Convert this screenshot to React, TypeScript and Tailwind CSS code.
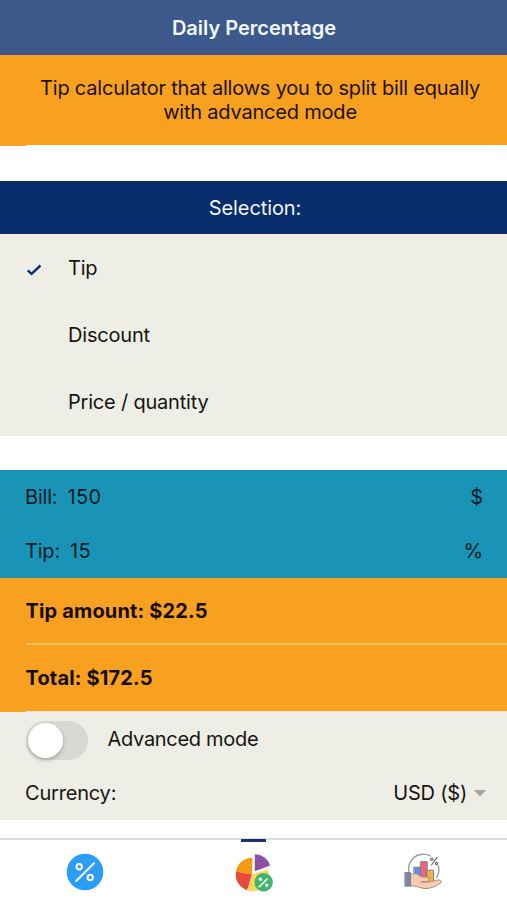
import { useState } from 'react';
import clsx from 'clsx';

const modes = ['Tip', 'Discount', 'Price / quantity'];

const inputs = [
  { label: 'Bill:', value: '150', unit: '$' },
  { label: 'Tip:', value: '15', unit: '%' },
];

function PercentIcon() {
  return (
    <svg className="size-[38px]" viewBox="0 0 38 38" fill="none">
      <circle cx="19" cy="19" r="18.3" fill="#2a9df4" />
      <g stroke="#fff" strokeWidth="2" strokeLinecap="round">
        <path d="M10.2 28 28 10.2" />
        <circle cx="13.2" cy="13.7" r="2.7" />
        <circle cx="24.2" cy="24.5" r="2.7" />
      </g>
    </svg>
  );
}

function PieIcon() {
  return (
    <svg className="size-[38px]" viewBox="0 0 38 38" fill="none">
      <path d="M17 20.5 1 17.5A16.3 16.3 0 0 1 17.5 3.7Z" fill="#f39c12" />
      <path d="M17 20.5 12.2 36.2A16.3 16.3 0 0 1 1 17.5Z" fill="#e8493a" />
      <path d="M17 20.5 32.8 15.5A16.3 16.3 0 0 1 12.2 36.2Z" fill="#fdd45c" />
      <path d="M19.8 17.2V.2A16.3 16.3 0 0 1 35.2 11.4Z" fill="#8a4fa8" />
      <circle cx="28.6" cy="28.3" r="9.2" fill="#3cb668" />
      <g fill="#fff">
        <path d="m32 24.2.9.8-8.4 8.6-.9-.8Z" stroke="#fff" strokeWidth=".5" />
        <circle cx="25.4" cy="25.3" r="1.7" />
        <circle cx="31.7" cy="31.3" r="1.7" />
      </g>
    </svg>
  );
}

function HandChartIcon() {
  return (
    <svg className="size-[40px]" viewBox="0 0 40 40" fill="none" strokeLinecap="round" strokeLinejoin="round">
      <path
        d="M5.2 20.8A14.9 14.9 0 0 1 26.5 3M34.3 12.8A14.9 14.9 0 0 1 32.6 24.5"
        stroke="#98a0a4"
        strokeWidth="1.4"
      />
      <g stroke="#7d8087" strokeWidth="1">
        <path d="M10.2 14.2h6.5v10.3h-6.5Z" fill="#5991f0" />
        <path d="M16.7 8.7h6.5v17h-6.5Z" fill="#f0627a" />
        <path d="M23.2 17.2h6.4v13.3h-6.4Z" fill="#f0b23e" />
      </g>
      <path
        d="M6.4 21.4c4.4-1.6 7.8-.4 10.8 2.6h4.8c3.8 0 3.8 4.7.3 4.9h-5.4 6.6c4 .1 7-1.4 10.4-1.9 3.6-.4 4.5 2.3 2 3.6-4.8 3-9.7 5.2-15 4.9-4.8-.3-9.5-3.2-14.5-2.8Z"
        fill="#fbcbb0"
        stroke="#a28e87"
        strokeWidth="1"
      />
      <path d="M1.2 19.5h5.4v13.7H1.2Z" fill="#7a86a3" stroke="#747986" strokeWidth=".8" />
      <g stroke="#666d73" strokeWidth="1.2">
        <path d="m27.5 12 5.4-7.4" />
        <circle cx="27.8" cy="6.2" r="1.2" />
        <circle cx="32.6" cy="10.5" r="1.2" />
      </g>
    </svg>
  );
}

const tabs = [
  { name: 'percentage', Icon: PercentIcon, offset: 'pl-px' },
  { name: 'tip', Icon: PieIcon, offset: 'pt-px' },
  { name: 'charts', Icon: HandChartIcon, offset: 'pl-[2px]' },
];

export default function App() {
  const [mode, setMode] = useState('Tip');
  const [advanced, setAdvanced] = useState(false);
  const [activeTab, setActiveTab] = useState('tip');

  return (
    <div className="flex h-[900px] w-[507px] flex-col overflow-hidden bg-white font-['Inter',sans-serif] text-[20px] leading-6 tracking-[-0.2px] text-[#151512]">
      {/* Header */}
      <header className="flex h-[54.5px] shrink-0 items-center justify-center bg-[#3d588b] pt-[2px] pl-px font-semibold tracking-normal text-[#f3f8ff]">
        <h1>Daily Percentage</h1>
      </header>

      <div className="flex h-[91.5px] shrink-0 flex-col bg-[#f8a01f] text-center text-[#1c1206]">
        <p className="flex-1 pt-[21px] pl-[13px]">
          Tip calculator that allows you to split bill equally
          <br />
          with advanced mode
        </p>
        <div className="ml-[26px] h-[1.5px] bg-[#fdfcf0]" />
      </div>

      {/* Mode selection */}
      <section className="mt-[34.5px] shrink-0">
        <h2 className="flex h-[53.5px] items-center justify-center bg-[#082c6c] pt-[2px] pl-[3px] tracking-[-0.1px] text-[#f2f5fc]">
          Selection:
        </h2>
        <div className="h-[201.5px] bg-[#eeede6]">
          {modes.map((item) => (
            <button
              key={item}
              onClick={() => setMode(item)}
              className="flex h-[67.1px] w-full items-center pl-[26px] text-left"
            >
              <span className="w-[42px] pt-[3px]">
                {mode === item && (
                  <svg className="h-[14px] w-[17px]" viewBox="0 0 17 14" fill="none">
                    <path d="m1.8 8.3 3.7 3.5 9-8.3" stroke="#0b2c7a" strokeWidth="2.4" />
                  </svg>
                )}
              </span>
              {item}
            </button>
          ))}
        </div>
      </section>

      {/* Inputs */}
      <section className="mt-[34.5px] h-[107.5px] shrink-0 bg-[#1994b7] text-[#051b24]">
        {inputs.map((row) => (
          <div key={row.label} className="flex h-[53.75px] items-center justify-between pt-px pr-[24px] pl-[25px]">
            <div className="flex gap-[10px]">
              <span>{row.label}</span>
              <span className="tracking-[0.4px]">{row.value}</span>
            </div>
            <span>{row.unit}</span>
          </div>
        ))}
      </section>

      {/* Results */}
      <section className="flex h-[134.5px] shrink-0 flex-col bg-[#f8a01f] font-bold tracking-[0.15px] text-[#150c02]">
        <p className="flex h-[65.5px] items-center pt-[2px] pl-[25.5px]">Tip amount: $22.5</p>
        <div className="ml-[26px] h-[2px] bg-[#eac464]" />
        <p className="flex flex-1 items-center pt-px pl-[25.5px]">Total: $172.5</p>
        <div className="ml-[26px] h-[1.5px] bg-[#ebe8cb]" />
      </section>

      {/* Settings */}
      <section className="h-[107.5px] shrink-0 bg-[#eeede6]">
        <div className="flex h-[54px] items-center gap-[20px] pl-[25.5px] tracking-[-0.3px]">
          <button
            role="switch"
            aria-checked={advanced}
            aria-label="Advanced mode"
            onClick={() => setAdvanced(!advanced)}
            className={clsx(
              'mt-[3px] flex h-[39px] w-[62px] items-center rounded-full p-[2px]',
              advanced ? 'justify-end bg-[#082c6c]' : 'bg-[#d7d9d3]'
            )}
          >
            <span className="size-[35px] rounded-full bg-white shadow-[0_2px_4px_rgba(0,0,0,0.25)]" />
          </button>
          <span>Advanced mode</span>
        </div>
        <div className="flex h-[53.5px] items-center justify-between pt-px pr-[21px] pl-[25px]">
          <span>Currency:</span>
          <span className="flex items-center gap-[7px]">
            USD ($)
            <svg className="h-[7px] w-[12px]" viewBox="0 0 12 7">
              <path d="M0 0h12L6 6.5Z" fill="#a3a3a0" />
            </svg>
          </span>
        </div>
      </section>

      {/* Tab bar */}
      <nav className="mt-[18.5px] grid h-[62px] shrink-0 grid-cols-3 border-t-2 border-[#dedede]">
        {tabs.map(({ name, Icon, offset }) => (
          <button
            key={name}
            aria-label={name}
            onClick={() => setActiveTab(name)}
            className="relative flex items-start justify-center pt-[13px]"
          >
            {activeTab === name && <span className="absolute -top-px h-[3px] w-[25px] bg-[#1c2f78]" />}
            <span className={offset}>
              <Icon />
            </span>
          </button>
        ))}
      </nav>
    </div>
  );
}
